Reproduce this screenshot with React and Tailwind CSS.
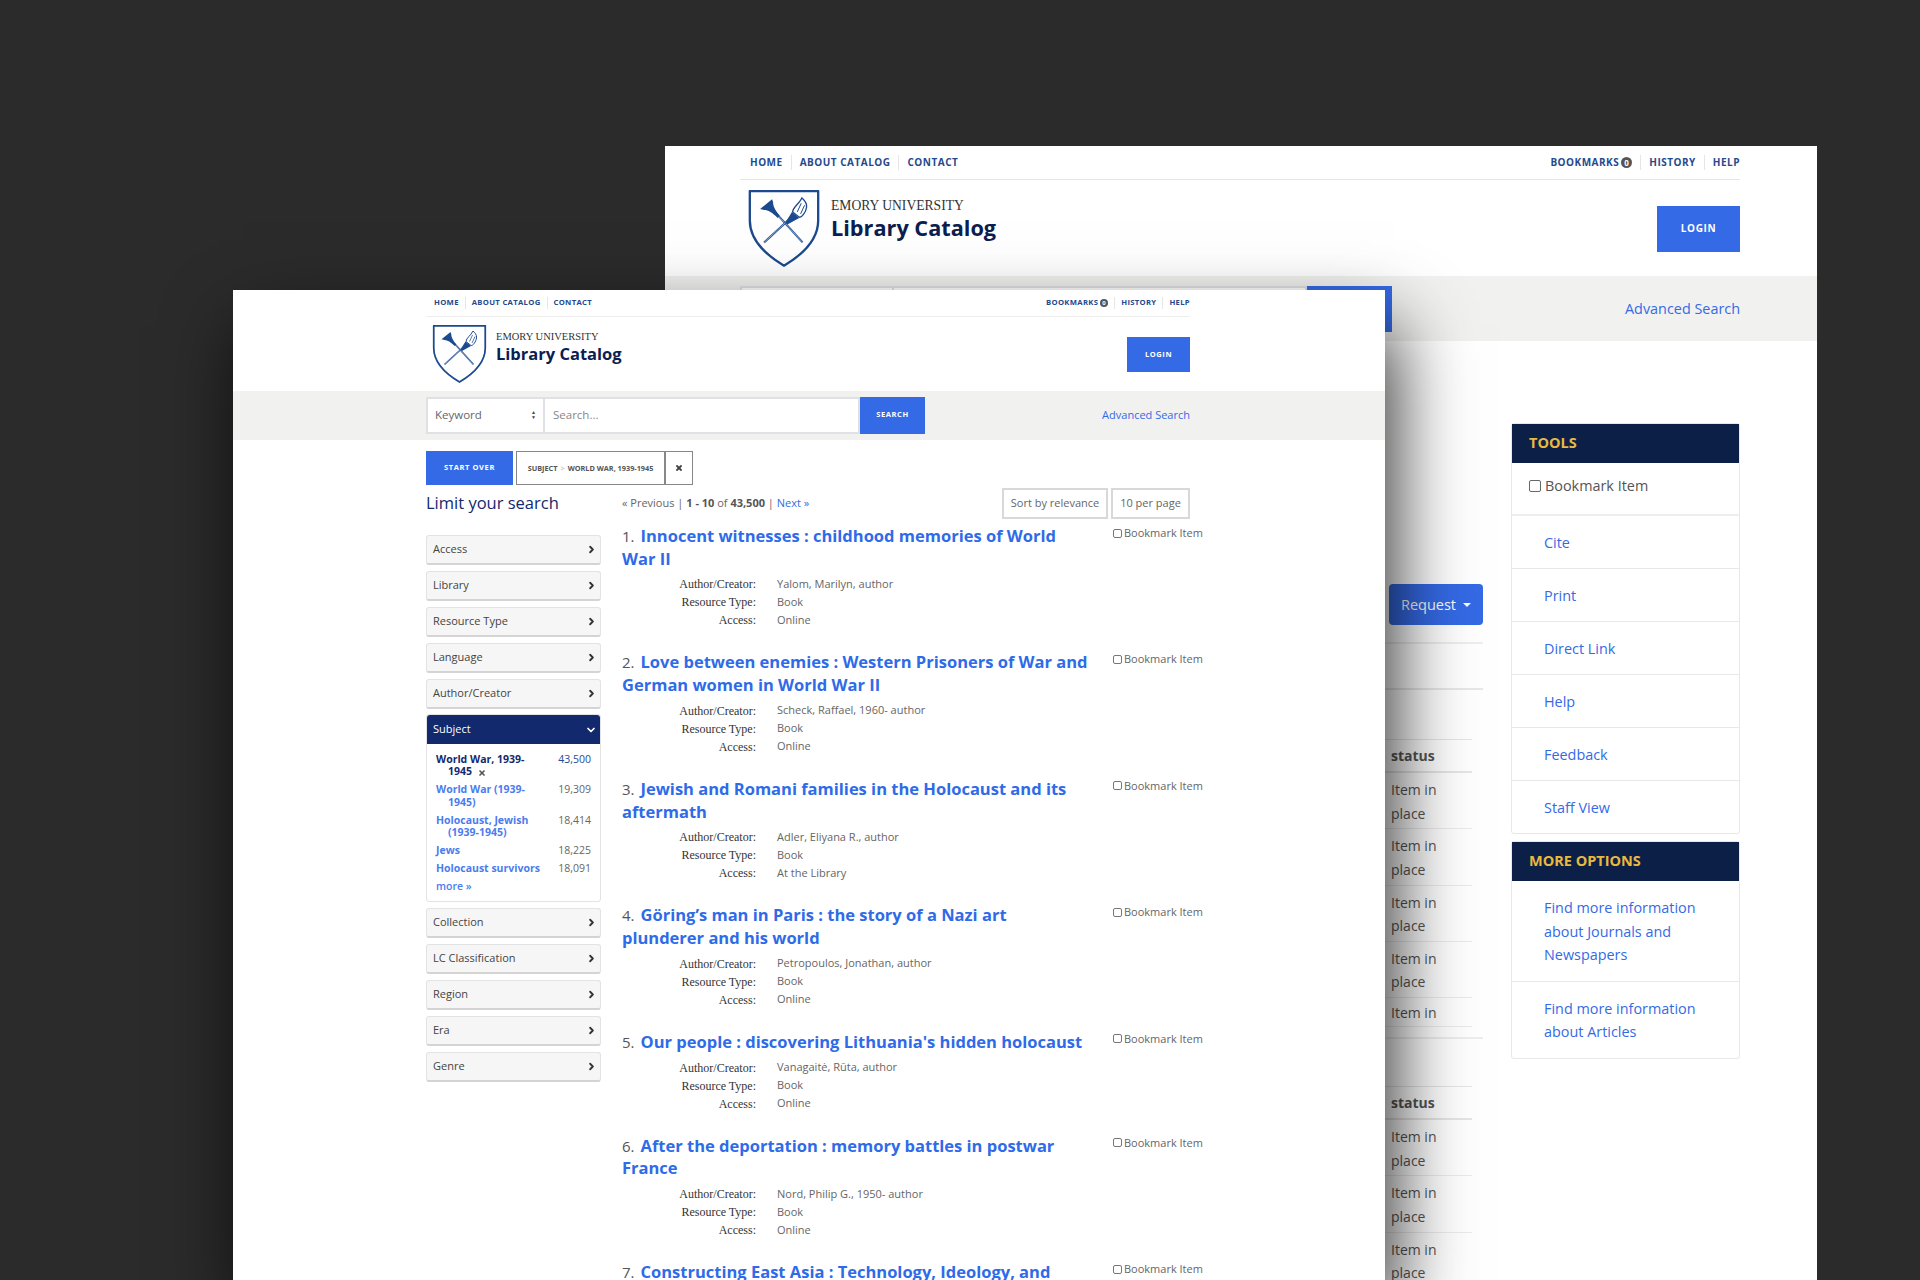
import React from 'react';
import { ChevronRight, ChevronDown, X } from 'lucide-react';

const facetsTop = ['Access', 'Library', 'Resource Type', 'Language', 'Author/Creator'];
const facetsBottom = ['Collection', 'LC Classification', 'Region', 'Era', 'Genre'];

const subjects = [
  { label: 'World War (1939-1945)', count: '19,309' },
  { label: 'Holocaust, Jewish (1939-1945)', count: '18,414' },
  { label: 'Jews', count: '18,225' },
  { label: 'Holocaust survivors', count: '18,091' },
];

const results = [
  { title: 'Innocent witnesses : childhood memories of World War II', author: 'Yalom, Marilyn, author', access: 'Online' },
  { title: 'Love between enemies : Western Prisoners of War and German women in World War II', author: 'Scheck, Raffael, 1960- author', access: 'Online' },
  { title: 'Jewish and Romani families in the Holocaust and its aftermath', author: 'Adler, Eliyana R., author', access: 'At the Library' },
  { title: 'Göring’s man in Paris : the story of a Nazi art plunderer and his world', author: 'Petropoulos, Jonathan, author', access: 'Online' },
  { title: 'Our people : discovering Lithuania\'s hidden holocaust', author: 'Vanagaitė, Rūta, author', access: 'Online' },
  { title: 'After the deportation : memory battles in postwar France', author: 'Nord, Philip G., 1950- author', access: 'Online' },
  { title: 'Constructing East Asia : Technology, Ideology, and Empire', author: 'Moore, Aaron Stephen, author', access: 'Online' },
];

function Shield({ className }) {
  return (
    <svg viewBox="0 0 212 232" className={className} fill="none">
      <path d="M3 3H209V92C209 150 160 196 106 228C52 196 3 150 3 92Z" stroke="#1b4a8e" strokeWidth="7" strokeLinejoin="round" />
      {/* crossed shafts, drawn blue with a white core */}
      <path d="M162 158L84 72" stroke="#1b4a8e" strokeWidth="6" />
      <path d="M162 158L84 72" stroke="#ffffff" strokeWidth="1.5" />
      <path d="M46 158L122 88" stroke="#1b4a8e" strokeWidth="6" />
      <path d="M46 158L122 88" stroke="#ffffff" strokeWidth="1.5" />
      {/* trumpet */}
      <path d="M34 57L70 28L73 36C73 48 78 58 93 78L87 84C71 68 58 60 46 60Z" fill="#1b4a8e" />
      {/* torch */}
      <path d="M110 98L130 66L152 84L116 104Z" fill="#1b4a8e" />
      <path d="M132 66C134 50 150 44 160 24C166 30 176 38 174 52C172 66 160 84 152 82Z" stroke="#1b4a8e" strokeWidth="4" fill="#ffffff" />
      <path d="M146 66L158 40M156 72L168 46" stroke="#1b4a8e" strokeWidth="3" />
    </svg>
  );
}

function TopNav({ left, right, size }) {
  const lg = size === 'lg';
  const text = lg ? 'text-[10px] tracking-[0.5px]' : 'text-[7.7px] tracking-[0.3px]';
  const gap = lg ? 'gap-[8px]' : 'gap-[6px]';
  const divider = lg ? 'border-l border-[#e6e6e6] pl-[8px]' : 'border-l border-[#e6e6e6] pl-[6px]';
  return (
    <div className={`flex justify-between font-bold uppercase text-[#1f4a8e] ${text}`}>
      <div className={`flex items-center ${gap}`}>
        {left.map((item, i) => (
          <span key={item} className={i > 0 ? divider : ''}>{item}</span>
        ))}
      </div>
      <div className={`flex items-center ${gap}`}>
        {right.map((item, i) => (
          <span key={item} className={`flex items-center gap-[2px] ${i > 0 ? divider : ''}`}>
            {item}
            {item === 'Bookmarks' && (
              <span className={`rounded-full bg-[#555555] text-center text-white ${lg ? 'h-[11px] w-[11px] text-[8px] leading-[11px]' : 'h-[8px] w-[8px] text-[6px] leading-[8px]'}`}>0</span>
            )}
          </span>
        ))}
      </div>
    </div>
  );
}

function Facet({ label }) {
  return (
    <div className="mb-[6px] flex h-[30px] items-center justify-between rounded-[3px] border border-[#e3e3e3] border-b-2 border-b-[#d4d4d4] bg-[#f6f6f6] pl-[6px] pr-[3px] text-[11px] text-[#444444]">
      {label}
      <ChevronRight size={11} strokeWidth={4} className="text-[#333333]" />
    </div>
  );
}

function SubjectFacet() {
  return (
    <div className="-mt-[1px] mb-[6px] rounded-[3px] border border-[#e3e3e3]">
      <div className="flex h-[29px] items-center justify-between rounded-t-[3px] bg-[#12296e] pl-[6px] pr-[3px] text-[11px] text-white">
        Subject
        <ChevronDown size={12} strokeWidth={3.5} />
      </div>
      <div className="px-[9px] pb-[9px] pt-[9px] text-[10.5px] leading-[12.4px]">
        <div className="mb-[5.5px] flex justify-between">
          <div className="w-[96px] pl-[12px] -indent-[12px] font-bold text-[#12296e]">
            World War, 1939-1945 <X size={8} strokeWidth={5} className="ml-[3px] inline text-[#555555]" />
          </div>
          <span className="text-[#2b4a8e]">43,500</span>
        </div>
        {subjects.map((s) => (
          <div key={s.label} className="mb-[5.5px] flex justify-between">
            <div className="w-[116px] pl-[12px] -indent-[12px] font-bold text-[#4a7cf0]">{s.label}</div>
            <span className="text-[#666666]">{s.count}</span>
          </div>
        ))}
        <div className="font-semibold text-[#4a7cf0]">more »</div>
      </div>
    </div>
  );
}

function Result({ item, n }) {
  const rows = [
    ['Author/Creator:', item.author],
    ['Resource Type:', 'Book'],
    ['Access:', item.access],
  ];
  return (
    <div className="flex pb-[22.3px]">
      <div className="w-[476px] shrink-0">
        <h3 className="w-[468px] text-[16.5px] font-bold leading-[22.6px] text-[#2f6be8]">
          <span className="mr-[6px] text-[15px] font-normal text-[#555555]">{n}.</span>
          {item.title}
        </h3>
        <div className="mt-[5px]">
          {rows.map(([k, v]) => (
            <div key={k} className="flex h-[18px] items-center">
              <span className="w-[134px] text-right font-['Liberation_Serif',serif] text-[12px] text-[#333333]">{k}</span>
              <span className="ml-[21px] text-[11px] text-[#666666]">{v}</span>
            </div>
          ))}
        </div>
      </div>
      <label className="ml-[15px] flex h-[16px] items-center gap-[1px] whitespace-nowrap text-[11px] text-[#666666]">
        <input type="checkbox" className="h-[9px] w-[9px] appearance-none rounded-[2px] border border-[#777777] bg-white" />
        <span className="ml-[1px]">Bookmark Item</span>
      </label>
    </div>
  );
}

function FrontWindow() {
  return (
    <div className="absolute left-[233px] top-[290px] h-[990px] w-[1152px] overflow-hidden bg-white shadow-[10px_36px_70px_rgba(0,0,0,0.8)]">
      <div className="ml-[193px] w-[764px]">
        <div className="flex h-[27px] items-center border-b border-[#eeeeee] pl-[8px]">
          <div className="w-full"><TopNav size="sm" left={['Home', 'About Catalog', 'Contact']} right={['Bookmarks', 'History', 'Help']} /></div>
        </div>
        <div className="flex h-[74px] items-center justify-between">
          <div className="flex items-center pl-[6px]">
            <Shield className="h-[58px] w-[55px]" />
            <div className="-mt-[12px] ml-[9px]">
              <div className="font-['Liberation_Serif',serif] text-[10.5px] leading-[12px] text-[#333333]">EMORY UNIVERSITY</div>
              <div className="text-[16.5px] font-bold leading-[22px] text-[#0c2050]">Library Catalog</div>
            </div>
          </div>
          <button className="mt-[1px] h-[35px] w-[63px] bg-[#356ae6] text-[7.5px] font-bold tracking-[0.6px] text-white">LOGIN</button>
        </div>
      </div>
      <div className="h-[49px] bg-[#f1f1ef]">
        <div className="ml-[193px] flex h-full w-[764px] items-center justify-between">
          <div className="-mt-[1px] flex h-[37px]">
            <div className="flex w-[119px] items-center justify-between border-2 border-[#dfe1e5] bg-white px-[7px] text-[11.5px] text-[#666666]">
              Keyword
              <span className="flex flex-col text-[5px] leading-[5px] text-[#444444]"><span>▲</span><span>▼</span></span>
            </div>
            <div className="flex w-[315px] items-center border-y-2 border-r-2 border-[#dfe1e5] bg-white pl-[8px] text-[11.5px] text-[#888888]">Search...</div>
            <button className="w-[65px] bg-[#356ae6] text-[7.5px] font-bold tracking-[0.6px] text-white">SEARCH</button>
          </div>
          <a className="text-[11px] text-[#356ae6]">Advanced Search</a>
        </div>
      </div>
      <div className="ml-[193px] w-[764px]">
        <div className="mt-[11px] flex h-[34px] gap-[3px]">
          <button className="w-[87px] bg-[#356ae6] text-[7.5px] font-bold tracking-[0.6px] text-white">START OVER</button>
          <div className="flex border border-[#888888]">
            <div className="flex w-[147px] items-center justify-center text-[7.3px] font-bold text-[#555555]">
              SUBJECT <span className="mx-[3px] font-normal text-[#aaaaaa]">&gt;</span> WORLD WAR, 1939-1945
            </div>
            <div className="flex w-[28px] items-center justify-center border-l-2 border-[#888888]">
              <X size={8} strokeWidth={5.5} className="text-[#444444]" />
            </div>
          </div>
        </div>
        <div className="mt-[3px] flex gap-[21px]">
          <div className="w-[175px]">
            <h2 className="mb-[20px] mt-[3px] text-[16.5px] leading-[24px] text-[#12296e]">Limit your search</h2>
            {facetsTop.map((f) => <Facet key={f} label={f} />)}
            <SubjectFacet />
            {facetsBottom.map((f) => <Facet key={f} label={f} />)}
          </div>
          <div className="min-w-0 flex-1">
            <div className="mb-[6px] flex h-[31px] items-center justify-between text-[11px] text-[#666666]">
              <div>
                « Previous | <b className="text-[#555555]">1 - 10</b> of <b className="text-[#555555]">43,500</b> | <a className="text-[#356ae6]">Next »</a>
              </div>
              <div className="flex h-full gap-[3px]">
                <div className="flex w-[106px] items-center justify-center border-2 border-[#d8d8d8]">Sort by relevance</div>
                <div className="flex w-[79px] items-center justify-center border-2 border-[#d8d8d8]">10 per page</div>
              </div>
            </div>
            {results.map((r, i) => <Result key={r.title} item={r} n={i + 1} />)}
          </div>
        </div>
      </div>
    </div>
  );
}

function Holdings({ rows, className }) {
  return (
    <div className={`mr-[11px] w-[92px] text-[14px] leading-[23.5px] text-[#555555] ${className}`}>
      <div className="flex h-[34px] items-center border-y border-b-2 border-[#e6e6e6] pl-[11px] font-bold">status</div>
      {rows.map((r, i) => (
        <div key={i} className={`border-b border-[#ececec] pl-[11px] ${r === 'short' ? 'h-[29px] pt-[3px]' : 'h-[56.3px] pt-[5px]'}`}>
          {r === 'short' ? 'Item in' : <>Item in<br />place</>}
        </div>
      ))}
    </div>
  );
}

function SidePanel({ title, className, children }) {
  return (
    <div className={`rounded-[3px] border border-[#e8e8e8] ${className}`}>
      <div className="flex h-[39px] items-center bg-[#0c1f47] pb-[2px] pl-[17px] text-[14.5px] font-bold text-[#e8b93f]">{title}</div>
      {children}
    </div>
  );
}

function BackWindow() {
  return (
    <div className="absolute left-[665px] top-[146px] h-[1134px] w-[1152px] overflow-hidden bg-white">
      <div className="ml-[75px] w-[1000px]">
        <div className="flex h-[34px] items-center border-b border-[#e6e6e6] pl-[10px]">
          <div className="w-full"><TopNav size="lg" left={['Home', 'About Catalog', 'Contact']} right={['Bookmarks', 'History', 'Help']} /></div>
        </div>
        <div className="flex h-[96px] items-center justify-between">
          <div className="flex items-center pl-[8px]">
            <Shield className="h-[77px] w-[72px]" />
            <div className="-mt-[16px] ml-[11px]">
              <div className="font-['Liberation_Serif',serif] text-[13.6px] leading-[16px] text-[#333333]">EMORY UNIVERSITY</div>
              <div className="text-[21.7px] font-bold leading-[28px] text-[#0c2050]">Library Catalog</div>
            </div>
          </div>
          <button className="mt-[1px] h-[46px] w-[83px] bg-[#356ae6] text-[10px] font-bold tracking-[0.6px] text-white">LOGIN</button>
        </div>
      </div>
      <div className="h-[65px] bg-[#f1f1ef]">
        <div className="ml-[75px] flex h-full w-[1000px] items-center justify-between">
          <div className="flex h-[46px]">
            <div className="w-[154px] border-2 border-[#dfe1e5] bg-white" />
            <div className="w-[413px] border-y-2 border-r-2 border-[#dfe1e5] bg-white" />
            <button className="w-[85px] bg-[#356ae6] text-[10px] font-bold text-white">SEARCH</button>
          </div>
          <a className="text-[14.4px] text-[#356ae6]">Advanced Search</a>
        </div>
      </div>
      <div className="ml-[75px] flex w-[1000px] justify-end gap-[28px]">
        <div className="flex w-[400px] flex-col items-end">
          <button className="mt-[243px] flex h-[41px] w-[94px] items-center justify-center gap-[7px] rounded-[4px] bg-[#356ae6] text-[14.5px] text-white">
            Request
            <span className="border-x-[4px] border-t-[4px] border-x-transparent border-t-white" />
          </button>
          <div className="mt-[17px] w-full border-t-2 border-[#eeeeee]" />
          <div className="mt-[44px] w-full border-t-2 border-[#e8e8e8]" />
          <Holdings className="mt-[49px]" rows={['full', 'full', 'full', 'full', 'short']} />
          <div className="mt-[10px] w-full border-t-2 border-[#eeeeee]" />
          <Holdings className="mt-[47px]" rows={['full', 'full', 'full']} />
        </div>
        <div className="w-[229px] pt-[82px]">
          <SidePanel title="TOOLS">
            <label className="flex h-[53px] items-start gap-[4px] border-b-2 border-[#eeeeee] pl-[17px] pt-[12px] text-[14.4px] text-[#555555]">
              <input type="checkbox" className="mt-[5px] h-[12px] w-[12px] appearance-none rounded-[2px] border border-[#666666] bg-white" />
              Bookmark Item
            </label>
            {['Cite', 'Print', 'Direct Link', 'Help', 'Feedback', 'Staff View'].map((t, i) => (
              <div key={t} className={`flex items-center pl-[32px] pt-[2px] text-[14.4px] text-[#356ae6] ${i < 5 ? 'h-[53px] border-b border-[#e8e8e8]' : 'h-[52px]'}`}>{t}</div>
            ))}
          </SidePanel>
          <SidePanel title="MORE OPTIONS" className="mt-[7px]">
            <div className="border-b border-[#e8e8e8] pb-[14px] pl-[32px] pt-[15px] text-[14.4px] leading-[23.5px] text-[#356ae6]">
              Find more information<br />about Journals and<br />Newspapers
            </div>
            <div className="pb-[14px] pl-[32px] pt-[15px] text-[14.4px] leading-[23.5px] text-[#356ae6]">
              Find more information<br />about Articles
            </div>
          </SidePanel>
        </div>
      </div>
    </div>
  );
}

export default function App() {
  return (
    <div className="relative h-[1280px] w-[1920px] overflow-hidden bg-[#2b2b2b] font-['Open_Sans',sans-serif]">
      <BackWindow />
      <FrontWindow />
    </div>
  );
}
